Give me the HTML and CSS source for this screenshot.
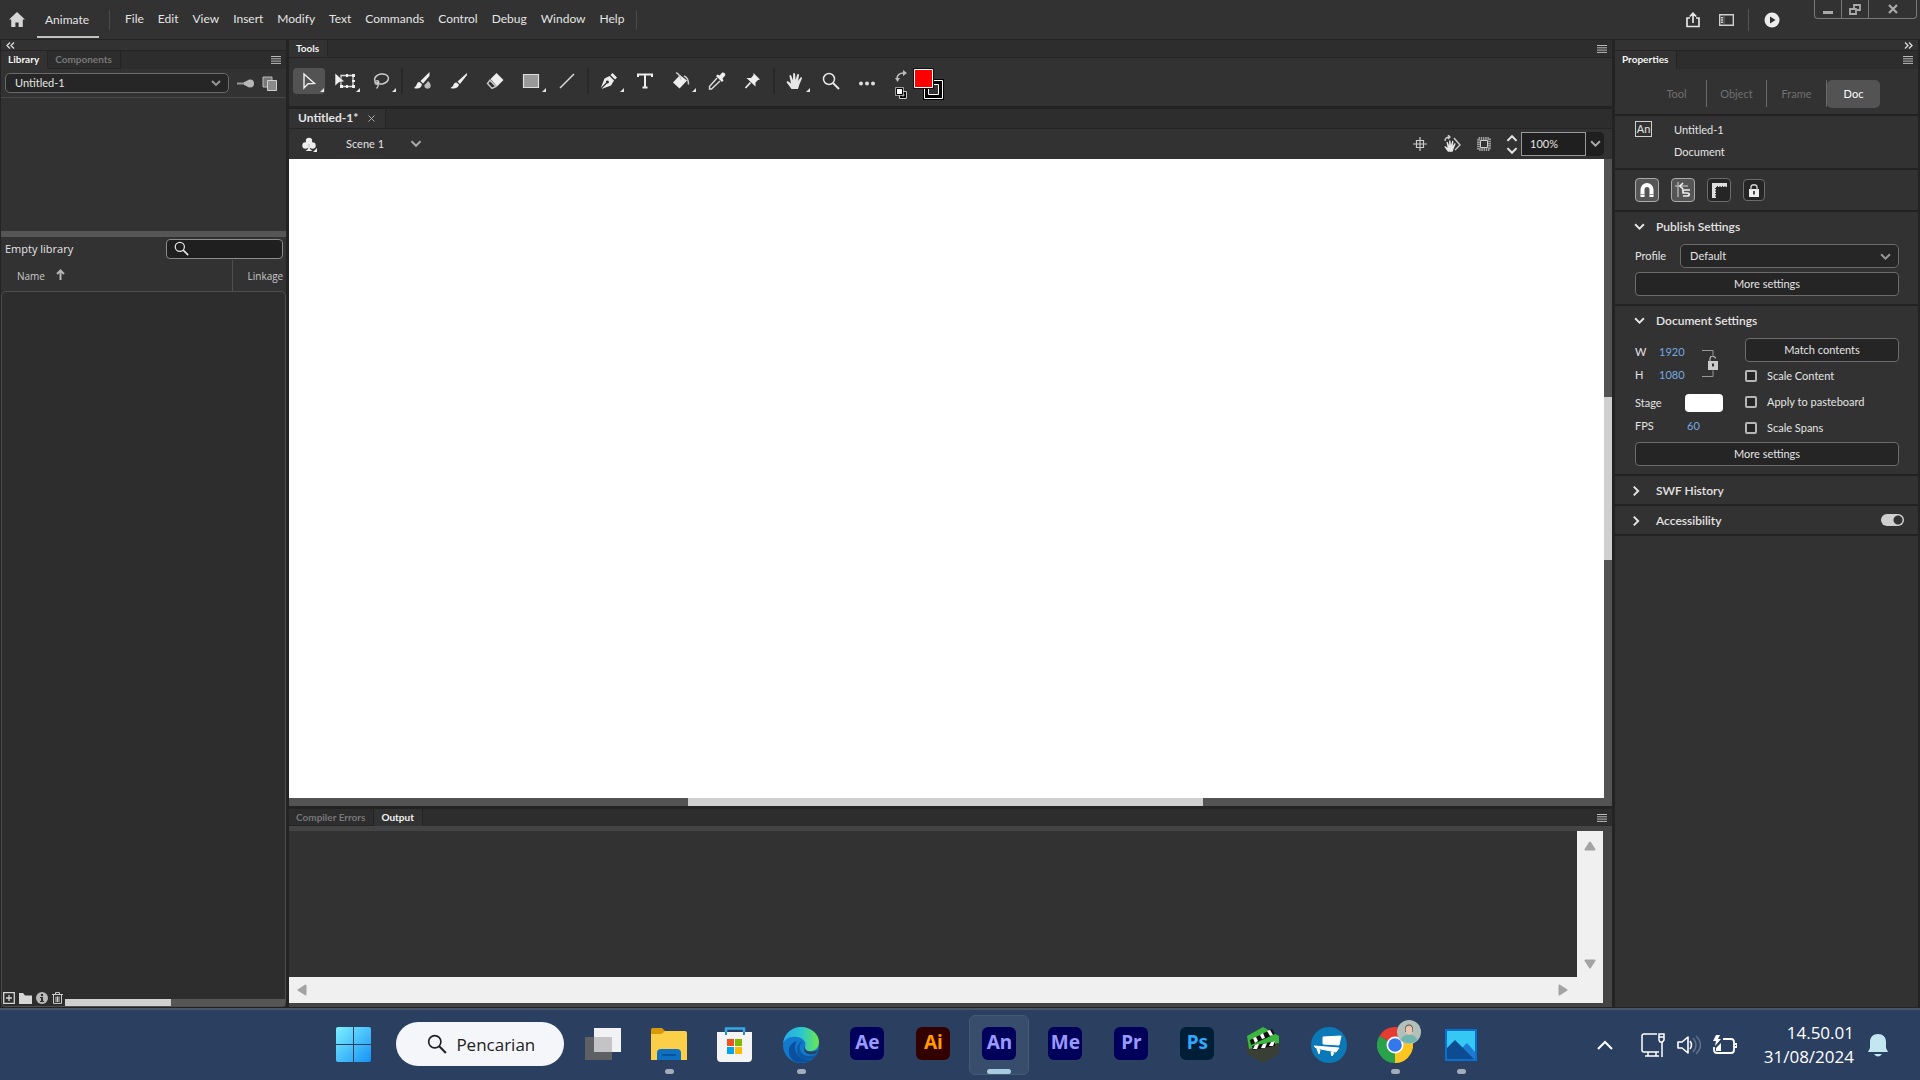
FILE: index.html
```html
<!DOCTYPE html>
<html lang="id">
<head>
    <meta charset="UTF-8">
    <meta name="viewport" content="width=device-width, initial-scale=1.0">
    <title>Animate</title>
    <link rel="stylesheet" href="styles.css">
</head>
<body>
    <!-- shared icons -->
    <svg class="sprite" width="0" height="0">
        <symbol id="chevron" viewBox="0 0 10 7"><path d="M1 1l4 4 4-4" fill="none" stroke="currentColor" stroke-width="1.8"/></symbol>
        <symbol id="burger" viewBox="0 0 10 8"><path d="M0 .5h10M0 2.8h10M0 5.1h10M0 7.4h10" stroke="currentColor"/></symbol>
        <symbol id="glass" viewBox="0 0 18 18"><circle cx="7" cy="7" r="5.5" fill="none" stroke="currentColor" stroke-width="1.5"/><path d="M11 11l6 6" stroke="currentColor" stroke-width="1.9"/></symbol>
        <symbol id="hand" viewBox="0 0 18 18"><path d="M5.5 17l-4.6-6.2c-.8-1.2.6-2 1.5-1.2L5 11.5 3.5 4.3c-.2-1.3 1.4-1.7 1.8-.4L7 8.2 7.2 2c0-1.3 1.8-1.3 1.9 0l.5 6L11.2 2.6c.4-1.2 2-.8 1.8.5l-.9 5.9 2.2-3.3c.8-1 2.1-.2 1.6.9l-2.6 6.2L12 17z" fill="currentColor"/></symbol>
        <symbol id="tri" viewBox="0 0 12 10"><path d="M6 1.5L10.5 8.5h-9z" fill="#a3a3a3" stroke="#a3a3a3" stroke-width="2" stroke-linejoin="round"/></symbol>
    </svg>

    <header class="menubar">
        <button class="home" aria-label="Home"><svg width="16" height="15" viewBox="0 0 16 15"><path d="M8 0L0 7.5h2.2V15h4.200v-4.5h3.2V15h4.200V7.5H16z" fill="#d6d6d6"/></svg></button>
        <a class="workspace" href="#">Animate</a>
        <nav class="menus">
            <a href="#">File</a><a href="#">Edit</a><a href="#">View</a><a href="#">Insert</a><a href="#">Modify</a><a href="#">Text</a><a href="#">Commands</a><a href="#">Control</a><a href="#">Debug</a><a href="#">Window</a><a href="#">Help</a>
        </nav>
        <div class="quick">
            <button aria-label="Share"><svg width="14" height="16" viewBox="0 0 14 16"><path d="M4 6H1v8.5h12V6h-3M7 11V2M3.8 4.5L7 1.3l3.2 3.2" fill="none" stroke="#e4e4e4" stroke-width="1.7"/></svg></button>
            <button aria-label="Workspaces"><svg width="15" height="12" viewBox="0 0 15 12"><path d="M.7.7h13.6v10.6H.7z" fill="none" stroke="#d0d0d0" stroke-width="1.4"/><path d="M3 3v6" stroke="#d0d0d0" stroke-width="2" stroke-dasharray="1.5 .8"/><path d="M5 1v10" stroke="#777"/></svg></button>
            <button class="play" aria-label="Test movie"><svg width="16" height="16" viewBox="0 0 16 16"><circle cx="8" cy="8" r="7.5" fill="#ececec"/><path d="M6 4.5v7L11.5 8z" fill="#303030"/></svg></button>
        </div>
        <div class="window-buttons">
            <button aria-label="Minimize"><svg width="12" height="10"><path d="M1 7h10v3H1z" fill="#aaa"/></svg></button>
            <button aria-label="Restore"><svg width="12" height="11" viewBox="0 0 12 11"><path d="M5 4V1h6v5H8M1 5h6v5H1z" fill="none" stroke="#aaa" stroke-width="1.8"/></svg></button>
            <button class="close" aria-label="Close"><svg width="10" height="10" viewBox="0 0 10 10"><path d="M1 1l8 8M9 1L1 9" stroke="#aaa" stroke-width="2.2"/></svg></button>
        </div>
    </header>

    <main class="workarea">
        <!-- Library -->
        <aside class="library">
            <div class="strip"><svg width="9" height="7" viewBox="0 0 9 7"><path d="M4 .5l-3 3 3 3M8 .5l-3 3 3 3" fill="none" stroke="#ddd" stroke-width="1.3"/></svg></div>
            <div class="tabs">
                <button class="tab active">Library</button>
                <button class="tab">Components</button>
                <svg class="burger" width="10" height="8"><use href="#burger"/></svg>
            </div>
            <div class="library-doc">
                <span class="select">
                    <select aria-label="Document"><option>Untitled-1</option></select>
                    <svg width="10" height="7"><use href="#chevron"/></svg>
                </span>
                <button aria-label="Pin library"><svg width="17" height="11" viewBox="0 0 17 11"><path d="M0 5.5h8" stroke="#999" stroke-width="2"/><path d="M7 4c3-1 4-2.500 6-2.500a4 4 0 0 1 0 8c-2 0-3-1.500-6-2.500z" fill="#b8b8b8"/></svg></button>
                <button aria-label="New library panel"><svg width="16" height="15" viewBox="0 0 16 15"><path d="M1 1h9v10H1z" fill="#777" stroke="#bbb"/><path d="M5.5 4.5h9v10h-9z" fill="#8a8a8a" stroke="#d0d0d0"/></svg></button>
            </div>
            <div class="preview"></div>
            <div class="library-search">
                <span>Empty library</span>
                <label class="search"><svg width="15" height="15"><use href="#glass"/></svg><input type="text" aria-label="Search library"></label>
            </div>
            <table class="columns">
                <tr>
                    <th>Name <svg width="9" height="11" viewBox="0 0 9 11"><path d="M4.5 11V2M1 5l3.5-3.5L8 5" fill="none" stroke="#b5b5b5" stroke-width="2"/></svg></th>
                    <th class="linkage">Linkage</th>
                </tr>
            </table>
            <div class="items">
                <div class="item-actions">
                    <button aria-label="New symbol"><svg width="12" height="12" viewBox="0 0 12 12"><path d="M.7.7h10.6v10.6H.7zM3 6h6M6 3v6" fill="none" stroke="#d6d6d6" stroke-width="1.3"/></svg></button>
                    <button aria-label="New folder"><svg width="13" height="11" viewBox="0 0 13 11"><path d="M0 0h4l2 2.5h7V11H0z" fill="#d6d6d6"/></svg></button>
                    <button aria-label="Properties"><svg width="12" height="12" viewBox="0 0 12 12"><circle cx="6" cy="6" r="6" fill="#b9b9b9"/><path d="M5 2h2v2H5zM4 5h3v4h1v1H4V9h1V6H4z" fill="#2d2d2d"/></svg></button>
                    <button aria-label="Delete"><svg width="11" height="12" viewBox="0 0 11 12"><path d="M0 2.5h11M3.5 2V.6h4V2M1.5 3v8.4h8V3M4 4.5V10M5.5 4.5V10M7 4.5V10" fill="none" stroke="#ccc"/></svg></button>
                </div>
                <div class="track"><div class="thumb"></div></div>
            </div>
        </aside>

        <section class="center">
            <div class="tabs tall">
                <button class="tab active">Tools</button>
                <svg class="burger" width="10" height="8"><use href="#burger"/></svg>
            </div>
            <div class="tools">
                <button class="tool more selected" aria-label="Selection"><svg width="18" height="18" viewBox="0 0 18 18"><path d="M4 2v14l4-4.2 6.500-.3z" fill="none" stroke="#eee" stroke-width="1.4"/></svg></button>
                <button class="tool more" aria-label="Free transform"><svg width="20" height="18" viewBox="0 0 20 18"><path d="M6 3.5h12v11H6z" fill="none" stroke="#ddd" stroke-width="1.3"/><path d="M17 2h3v3h-3zM17 13h3v3h-3zM5 13h3v3H5zM11 2h2v3h-2zM11 13h2v3h-2zM17 8h3v2h-3z" fill="#eee"/><path d="M0 1v13l4-3.500 5.500-1z" fill="#eee" stroke="#323232" stroke-width=".6"/></svg></button>
                <button class="tool more" aria-label="Lasso"><svg width="18" height="18" viewBox="0 0 18 18"><ellipse cx="9.5" cy="7" rx="7" ry="5" transform="rotate(-10 9.5 7)" fill="none" stroke="#ccc" stroke-width="1.5"/><path d="M4 9c2.500-1 4 1.500 2 3-2 1-4-.5-2.500-2.500M5.500 10c1.500 3 .5 5-1 6.500" fill="none" stroke="#ccc" stroke-width="1.3"/></svg></button>
                <span class="divider"></span>
                <button class="tool" aria-label="Fluid brush"><svg width="18" height="18" viewBox="0 0 18 18"><path d="M15.500 0L6.500 9l2.500 2.500L15.500 4zM5.500 10c-2.500 0-2.500 2.500-3.500 4L0 16c4 1.500 7.500 0 8-3.800z" fill="#eee"/><path d="M14 9c2.500 2 3 4 2.500 6-1.500 2.500-5.500 2-6-.5-.5-2.500 2-2.500 3.500-5.500z" fill="#bbb"/></svg></button>
                <button class="tool" aria-label="Brush"><svg width="18" height="18" viewBox="0 0 18 18"><path d="M17 1L7.500 9.500 10 12l7-9zM6.500 10.500c-2.500 0-3 2-3.500 3.500l-2.500 2c3.500 1.500 8 0 8.500-3.500z" fill="#eee"/></svg></button>
                <button class="tool" aria-label="Eraser"><svg width="18" height="18" viewBox="0 0 18 18"><path d="M10.5 1L17.5 8 11 14.5 4.5 7z" fill="#eee"/><path d="M4 8.2L1.500 11.500l4.500 5 4-2z" fill="none" stroke="#ccc" stroke-width="1.4"/></svg></button>
                <button class="tool more" aria-label="Rectangle"><svg width="18" height="18" viewBox="0 0 18 18"><path d="M1.500 2.500h15v13h-15z" fill="#999" stroke="#ddd" stroke-width="1.2"/></svg></button>
                <button class="tool" aria-label="Line"><svg width="18" height="18" viewBox="0 0 18 18"><path d="M2 16L16 2" stroke="#ddd" stroke-width="1.5"/></svg></button>
                <span class="divider"></span>
                <button class="tool more" aria-label="Pen"><svg width="18" height="18" viewBox="0 0 18 18"><path d="M12.500 1l4.500 4.500-2 2L10.500 3zM9.500 4l4.500 4.500-3 5L1.500 17 7 11.500a1.500 1.500 0 1 0-1-1L.8 16 4.500 6.500z" fill="#eee"/></svg></button>
                <button class="tool" aria-label="Text"><svg width="18" height="18" viewBox="0 0 18 18"><path d="M2 5V2.500h14V5M9 2.500v13M6.500 15.500h5" fill="none" stroke="#eee" stroke-width="2"/></svg></button>
                <button class="tool more" aria-label="Paint bucket"><svg width="18" height="18" viewBox="0 0 18 18"><path d="M8 3l7 5.500-7.500 8L1 10.500z" fill="#eee"/><path d="M4 1c2-.5 3.500 2 5 6.500M12 4c3 1 4.500 3 4.500 8.500" fill="none" stroke="#ccc" stroke-width="1.6"/></svg></button>
                <button class="tool" aria-label="Eyedropper"><svg width="18" height="18" viewBox="0 0 18 18"><path d="M9 6L1.500 14.500V17h2L12 9" fill="none" stroke="#ddd" stroke-width="1.4"/><path d="M8 4l1.500-1.500 2 1L14 .8c2-1 4 1 3 3L14.500 6.500l1 2L14 10z" fill="#eee"/></svg></button>
                <button class="tool" aria-label="Asset warp"><svg width="18" height="18" viewBox="0 0 18 18"><path d="M9.500 1l6.500 6.500-2 .5-2.500 2.500v4L2.500 6H7l2.500-3z" fill="#eee"/><path d="M6.500 10.500L1.500 16" stroke="#eee" stroke-width="1.8"/></svg></button>
                <span class="divider"></span>
                <button class="tool more" aria-label="Hand"><svg class="light" width="18" height="18"><use href="#hand"/></svg></button>
                <button class="tool" aria-label="Zoom"><svg class="light" width="18" height="18"><use href="#glass"/></svg></button>
                <button class="tool" aria-label="Edit toolbar"><svg width="18" height="18" viewBox="0 0 18 18"><g fill="#ddd"><circle cx="3" cy="11.500" r="2"/><circle cx="9" cy="11.500" r="2"/><circle cx="15" cy="11.500" r="2"/></g></svg></button>
                <div class="colors">
                    <div class="color-actions">
                        <button aria-label="Swap colors"><svg width="12" height="12" viewBox="0 0 12 12"><path d="M2 9C2 5 4 3 9 3" fill="none" stroke="#bbb" stroke-width="1.6"/><path d="M8 0l4 3-4 3zM0 8h5l-2.500 4z" fill="#bbb"/></svg></button>
                        <button aria-label="Default colors"><svg width="12" height="12" viewBox="0 0 12 12"><path d="M4.500 4.500h7v7h-7z" fill="#000" stroke="#ccc"/><path d="M7 7h2v2H7z" fill="#333" stroke="#ccc" stroke-width=".6"/><path d="M1.500 1.500h6v6h-6z" fill="#fff" stroke="#000"/><path d="M.5.5h8v8h-8z" fill="none" stroke="#ccc" stroke-width=".7"/></svg></button>
                    </div>
                    <svg width="32" height="33" viewBox="0 0 32 33"><path d="M10 11h21v21H10z" fill="#000"/><path d="M11.500 12.500h18v18h-18zM15.500 16.500h10v10h-10z" fill="#000" stroke="#fff"/><path d="M16 17h9v9h-9z" fill="#323232"/><path d="M0 0h21v21H0z" fill="#111"/><path d="M1.500 1.500h18v18h-18z" fill="#f00" stroke="#fff"/></svg>
                </div>
            </div>
            <div class="doc-tabs">
                <button class="doc-tab">Untitled-1* <svg width="7" height="7" viewBox="0 0 7 7"><path d="M.5.5l6 6M6.500.5l-6 6" stroke="#aaa"/></svg></button>
            </div>
            <div class="scene">
                <button aria-label="Edit symbols"><svg width="15" height="15" viewBox="0 0 15 15"><g fill="#eee"><circle cx="7" cy="4" r="3.200"/><circle cx="3.500" cy="8.500" r="3.200"/><circle cx="10.500" cy="8.500" r="3.200"/><path d="M6.500 7h1l.5 5 2.500 2h-7L6 12zM15 11v4h-4z"/></g></svg></button>
                <button class="scene-name">Scene 1 <svg width="12" height="8"><use href="#chevron"/></svg></button>
                <div class="view-tools">
                    <button aria-label="Center stage"><svg width="14" height="14" viewBox="0 0 14 14"><path d="M7 0v14M0 7h14M3.500 3.500h7v7h-7z" fill="none" stroke="#ccc" stroke-width="1.2"/></svg></button>
                    <button aria-label="Rotate stage"><svg class="light" width="18" height="18" viewBox="0 0 18 18"><use href="#hand" x="1" y="4" width="13" height="14"/><path d="M11 3l6 7-5 5M2 6c0-3 2-4 5-4M5 0l2 2-2 2" fill="none" stroke="#ccc" stroke-width="1.4"/></svg></button>
                    <button aria-label="Clip content"><svg width="14" height="14" viewBox="0 0 14 14"><path d="M1.500 1.500h11v11h-11z" fill="none" stroke="#999" stroke-width="3" stroke-dasharray="1.500 .7"/><path d="M3.500 3.500h7v7h-7z" fill="#323232" stroke="#ccc"/></svg></button>
                    <span class="stepper">
                        <svg class="up" width="12" height="8"><use href="#chevron"/></svg>
                        <svg width="12" height="8"><use href="#chevron"/></svg>
                    </span>
                    <span class="zoom">
                        <input type="text" value="100%" aria-label="Zoom level">
                        <button aria-label="Zoom presets"><svg width="11" height="8"><use href="#chevron"/></svg></button>
                    </span>
                </div>
            </div>
            <div class="stage">
                <div class="canvas"></div>
                <div class="scroll-y"><div class="thumb"></div></div>
                <div class="scroll-x"><div class="thumb"></div></div>
            </div>
            <div class="output">
                <div class="tabs tall">
                    <button class="tab">Compiler Errors</button>
                    <button class="tab active">Output</button>
                    <svg class="burger" width="10" height="8"><use href="#burger"/></svg>
                </div>
                <div class="output-body">
                    <div class="log"></div>
                    <div class="bar-y">
                        <svg width="12" height="10"><use href="#tri"/></svg>
                        <svg class="down" width="12" height="10"><use href="#tri"/></svg>
                    </div>
                    <div class="bar-x">
                        <svg class="left" width="12" height="10"><use href="#tri"/></svg>
                        <svg class="right" width="12" height="10"><use href="#tri"/></svg>
                    </div>
                </div>
            </div>
        </section>

        <!-- Properties -->
        <aside class="properties">
            <div class="strip end"><svg width="9" height="7" viewBox="0 0 9 7"><path d="M1 .5l3 3-3 3M5 .5l3 3-3 3" fill="none" stroke="#ddd" stroke-width="1.3"/></svg></div>
            <div class="tabs">
                <button class="tab active">Properties</button>
                <svg class="burger" width="10" height="8"><use href="#burger"/></svg>
            </div>
            <div class="modes">
                <button>Tool</button>
                <button>Object</button>
                <button>Frame</button>
                <button class="active">Doc</button>
            </div>
            <div class="group doc-info">
                <span class="an-icon">An</span>
                <div><p>Untitled-1</p><p>Document</p></div>
            </div>
            <div class="group toggles">
                <button class="on" aria-label="Snap to objects"><svg width="14" height="14" viewBox="0 0 14 14"><path d="M2.500 14V6.500a4.500 4.500 0 0 1 9 0V14" fill="none" stroke="#fff" stroke-width="4"/><path d="M0 11.500h5M9 11.500h5" stroke="#999"/></svg></button>
                <button class="on" aria-label="Snap align"><svg width="16" height="16" viewBox="0 0 16 16"><path d="M0 4h13M3 0v15" stroke="#aaa" stroke-width="1.5"/><path d="M8 1L5 4l3 3M15 8H8v3h4c3 0 3 3 0 3H8" fill="none" stroke="#eee" stroke-width="1.7"/></svg></button>
                <button aria-label="Rulers"><svg width="15" height="15" viewBox="0 0 15 15"><path d="M0 0h15v4H4v11H0z" fill="#ddd"/><path d="M5 3.500h10M3.500 5v10" stroke="#252525" stroke-dasharray="1 1.500"/></svg></button>
                <button class="small" aria-label="Lock guides"><svg width="10" height="13" viewBox="0 0 10 13"><path d="M0 5h10v8H0z" fill="#eee"/><path d="M2 6V3a3 2.300 0 0 1 6 0v3" fill="none" stroke="#ccc" stroke-width="1.4"/><path d="M4.200 7h1.600v3.500H4.200z" fill="#222"/></svg></button>
            </div>
            <div class="group publish">
                <h2><svg width="11" height="8"><use href="#chevron"/></svg>Publish Settings</h2>
                <div class="profile">
                    <label for="profile">Profile</label>
                    <span class="select">
                        <select id="profile"><option>Default</option></select>
                        <svg width="11" height="8"><use href="#chevron"/></svg>
                    </span>
                </div>
                <button class="wide">More settings</button>
            </div>
            <div class="group document">
                <h2><svg width="11" height="8"><use href="#chevron"/></svg>Document Settings</h2>
                <div class="doc-grid">
                    <div class="fields">
                        <div class="size">
                            <div>
                                <p><label for="w">W</label><input id="w" type="text" value="1920"></p>
                                <p><label for="h">H</label><input id="h" type="text" value="1080"></p>
                            </div>
                            <svg width="17" height="29" viewBox="0 0 17 29"><path d="M1 1.500h11v5M1 27.500h11v-6" fill="none" stroke="#999"/><path d="M7 12h10v9H7z" fill="#ccc"/><path d="M9 12V9.500c0-3 5-3 5.500 0" fill="none" stroke="#bbb" stroke-width="1.2"/><path d="M11 14.500h2v3h-2z" fill="#333"/></svg>
                        </div>
                        <p class="far"><label for="stage">Stage</label><input id="stage" type="color" value="#ffffff"></p>
                        <p class="far"><label for="fps">FPS</label><input id="fps" type="text" value="60"></p>
                    </div>
                    <div class="scaling">
                        <button class="wide">Match contents</button>
                        <label><input type="checkbox">Scale Content</label>
                        <label><input type="checkbox">Apply to pasteboard</label>
                        <label><input type="checkbox">Scale Spans</label>
                    </div>
                </div>
                <button class="wide">More settings</button>
            </div>
            <div class="group closed">
                <h2><svg width="11" height="8"><use href="#chevron"/></svg>SWF History</h2>
            </div>
            <div class="group closed">
                <h2><svg width="11" height="8"><use href="#chevron"/></svg><label for="access">Accessibility</label></h2>
                <input id="access" class="switch" type="checkbox" checked>
            </div>
        </aside>
    </main>

    <footer class="taskbar">
        <nav class="apps">
            <button class="app" aria-label="Start"><svg width="36" height="36" viewBox="0 0 36 36"><defs><linearGradient id="win" x2="1" y2="1"><stop stop-color="#7df0ff"/><stop offset="1" stop-color="#1592f5"/></linearGradient></defs><path d="M2 0h15v17H0V2q0-2 2-2zM18 0h15q2 0 2 2v15H18zM0 18h17v17H2q-2 0-2-2zM18 18h17v15q0 2-2 2H18z" fill="url(#win)"/></svg></button>
            <label class="task-search"><svg width="20" height="20"><use href="#glass"/></svg><input type="text" placeholder="Pencarian" aria-label="Pencarian"></label>
            <button class="app" aria-label="Task view"><svg width="36" height="36" viewBox="0 0 36 36"><path d="M0 10h27v23H0z" fill="#5f6063"/><path d="M9 1h27v24H9z" fill="#f2f2f4"/><path d="M9 10h18v15H9z" fill="#c4c4c6"/></svg></button>
            <button class="app open" aria-label="File Explorer"><svg width="36" height="36" viewBox="0 0 36 36"><path d="M0 8V3q0-2 2-2h9l4 4h-3v3z" fill="#d99a07"/><path d="M0 7h10l4-3h20q2 0 2 2v27H0z" fill="#fbcf47"/><path d="M6 33V26q0-4 4-4h16q4 0 4 4v7z" fill="#0f6fc2"/><path d="M11 28h14" stroke="#084a8c" stroke-width="1.5"/></svg></button>
            <button class="app" aria-label="Microsoft Store"><svg width="36" height="36" viewBox="0 0 36 36"><path d="M9 8V1.500h18V8" fill="none" stroke="#35a9e6" stroke-width="2.5"/><path d="M0 5h35v26q0 4-4 4H4q-4 0-4-4z" fill="#f4f4f4"/><path d="M9 5v3M27 5v3" stroke="#238bc9" stroke-width="2"/><path d="M10 12h7v7h-7z" fill="#f05023"/><path d="M18 12h7v7h-7z" fill="#7fba00"/><path d="M10 20h7v7h-7z" fill="#00a4ef"/><path d="M18 20h7v7h-7z" fill="#ffb900"/></svg></button>
            <button class="app open" aria-label="Edge"><svg width="36" height="36" viewBox="0 0 36 36"><defs><linearGradient id="edge"><stop stop-color="#28a9e8"/><stop offset=".5" stop-color="#2bc5cf"/><stop offset="1" stop-color="#6ae84c"/></linearGradient></defs><circle cx="18" cy="18" r="18" fill="#1279cf"/><path d="M0 16C2 5 10 0 18 0c10 0 18 7 18 15 0 8-7 10-12 9-3-1-3-2-2-4 2-5-2-9-8-10C8 9 3 11 0 16z" fill="url(#edge)"/><path d="M14 14c-5 8 0 19 13 19-5 4-15 4-19-2-5-8-1-15 6-17z" fill="#0b4fa0"/><path d="M21 14c-6 2-7 14 5 15 4 0 7-1 9-4-2 8-12 10-18 5-6-6-3-15 4-16z" fill="#0c59a4"/><path d="M22 19c-1 6 7 7 13 4-1 2-2 3-3 4-8 2-13-3-10-8z" fill="#2b3f61"/></svg></button>
            <button class="app"><span class="adobe">Ae</span></button>
            <button class="app"><span class="adobe ai">Ai</span></button>
            <button class="app current"><span class="adobe">An</span></button>
            <button class="app"><span class="adobe">Me</span></button>
            <button class="app"><span class="adobe">Pr</span></button>
            <button class="app"><span class="adobe ps">Ps</span></button>
            <button class="app" aria-label="Clapper"><svg width="32" height="36" viewBox="0 0 32 36"><path d="M16 0l16 9v18l-16 9L0 27V9z" fill="#3a3f36"/><path d="M16 0l16 9v7L2 22 0 9z" fill="#39b83d"/><path d="M3 13L25 2l3 5L4 18z" fill="#111"/><path d="M6 11l3-1 2 4-3 2zM13 8l3-2 2 5-3 1zM20 4l3-1 3 5-3 1z" fill="#fff"/><path d="M5 19l23-5v5L6 23z" fill="#111"/><path d="M8 18l4-1-2 5H6zM16 17l4-1-2 5h-4zM24 15l4-1-2 5h-4z" fill="#fff"/></svg></button>
            <button class="app" aria-label="Blocs"><svg width="36" height="36" viewBox="0 0 36 36"><circle cx="18" cy="18" r="18" fill="#0b78b8"/><path d="M12 10l18-1-2 9-16-1zM3 19l25 2-3 4-20-4zM6 22l3 1-1 4zM20 25l3 1-2 3z" fill="#fff" stroke="#fff" stroke-linejoin="round"/></svg></button>
            <button class="app open chrome" aria-label="Chrome"><svg width="36" height="36" viewBox="0 0 36 36"><path d="M18 18L2.400 9a18 18 0 0 1 31.200 0z" fill="#e53b30"/><path d="M18 18L33.600 9A18 18 0 0 1 18 36z" fill="#fcc51f"/><path d="M18 18v18A18 18 0 0 1 2.400 9z" fill="#2aa14b"/><path d="M18 10h15.600A18 18 0 0 1 18 36l7-14z" fill="#fcc51f"/><circle cx="18" cy="18" r="8.500" fill="#fff"/><circle cx="18" cy="18" r="6.800" fill="#3478eb"/></svg><svg class="avatar" width="24" height="24" viewBox="0 0 24 24"><circle cx="12" cy="12" r="12" fill="#b3c0ba"/><path d="M4 20c1-7 15-7 16 0-4 4-12 4-16 0z" fill="#6fb5b0"/><path d="M8 9c0-6 8-6 8 0v3H8z" fill="#4c4540"/><ellipse cx="12" cy="10" rx="3.500" ry="4.500" fill="#e8c4b1"/></svg></button>
            <button class="app open" aria-label="Photos"><svg width="32" height="32" viewBox="0 0 32 32"><path d="M1 1h30v30H1z" fill="#35c8f5" stroke="#0b6fce" stroke-width="2"/><path d="M17 19l5-5 8 9v7h-8z" fill="#1b7bd1"/><path d="M2 19l8-8 19 19H2z" fill="#0e4c92"/></svg></button>
        </nav>
        <div class="tray">
            <button class="caret" aria-label="Hidden icons"><svg width="16" height="10" viewBox="0 0 16 10"><path d="M1 9l7-7 7 7" fill="none" stroke="#fff" stroke-width="2"/></svg></button>
            <svg width="24" height="24" viewBox="0 0 24 24"><path d="M16 1H3a2 2 0 0 0-2 2v14a2 2 0 0 0 2 2h15M7 19v4M15 19v4M4 23h14M18 1h5v6l-1.500 2H19l-1-2zM18 4h5M21 9v15" fill="none" stroke="#fff" stroke-width="1.5"/></svg>
            <svg width="24" height="20" viewBox="0 0 24 20"><path d="M1 7h4l6-5v16l-6-5H1z" fill="none" stroke="#fff" stroke-width="1.6" stroke-linejoin="round"/><path d="M13 6q3 4 0 8" fill="none" stroke="#fff" stroke-width="1.6"/><path d="M16 3q6 7 0 14M19 1q9 9 0 18" fill="none" stroke="#60718e" stroke-width="1.6"/></svg>
            <svg width="24" height="20" viewBox="0 0 24 20"><path d="M10 4h8q3 0 3 3v8q0 3-3 3H4q-3 0-3-3v-3M21 9h3v3h-3" fill="none" stroke="#fff" stroke-width="1.8"/><path d="M3 0h4L5 4h3l-6 7 1-5H0zM3 16v-3l5-5v8z" fill="#fff"/></svg>
            <div class="clock"><time>14.50.01</time><time>31/08/2024</time></div>
            <svg width="20" height="23" viewBox="0 0 20 23"><path d="M10 0c5 0 8 3 8 8v6l2 4H0l2-4V8c0-5 3-8 8-8zM6 20h8q-4 5-8 0z" fill="#c3e7f0"/></svg>
        </div>
    </footer>
</body>
</html>
```

FILE: styles.css
```css
* {
    box-sizing: border-box;
}
body {
    margin: 0;
    height: 100vh;
    display: flex;
    flex-direction: column;
    overflow: hidden;
    background-color: #232323;
    color: #e4e4e4;
    font-family: Lato, "Open Sans", sans-serif;
    font-size: 12px;
    line-height: 16px;
}
button, input, select {
    font: inherit;
    color: inherit;
    background: none;
    border: none;
    margin: 0;
    padding: 0;
}
button {
    display: flex;
    align-items: center;
    justify-content: center;
}
a {
    color: inherit;
    text-decoration: none;
}
p {
    margin: 0;
}
svg {
    display: block;
    flex: none;
}
.sprite {
    position: absolute;
}
.light {
    color: #e8e8e8;
}

/* menu bar */
.menubar {
    display: flex;
    align-items: center;
    height: 39px;
    flex: none;
    padding-left: 9px;
    background-color: #323232;
}
.workspace {
    height: 36px;
    margin-left: 12px;
    padding: 10px 10px 0 8px;
    border-bottom: 2px solid #c0c0c0;
}
.menus {
    display: flex;
    gap: 14px;
    margin-left: 10px;
    padding: 1px 12px 3px 15px;
    border-left: 1px solid #4a4a4a;
    border-right: 1px solid #4a4a4a;
}
.quick {
    display: flex;
    align-items: center;
    gap: 19px;
    margin-left: auto;
}
.play {
    height: 22px;
    padding-left: 15px;
    border-left: 1px solid #555;
    margin-left: -5px;
}
.window-buttons {
    display: flex;
    align-self: flex-start;
    height: 19px;
    margin: 0 3px 0 34px;
    border: 1px solid #777;
    border-top: none;
    border-radius: 0 0 4px 4px;
}
.window-buttons button {
    width: 27px;
    border-right: 1px solid #777;
}
.window-buttons .close {
    width: 47px;
    border-right: none;
}

.workarea {
    display: grid;
    grid-template-columns: 285px minmax(0, 1fr) 303px;
    gap: 3px;
    flex: 1;
    min-height: 0;
    padding: 1px 2px 1px 1px;
}
.library, .center, .properties {
    display: flex;
    flex-direction: column;
    min-width: 0;
    min-height: 0;
    background-color: #323232;
}

/* tabs */
.strip {
    display: flex;
    align-items: center;
    height: 11px;
    flex: none;
    padding: 0 5px;
    border-bottom: 1px solid #252525;
}
.strip.end {
    justify-content: flex-end;
}
.tabs {
    display: flex;
    align-items: stretch;
    height: 18px;
    flex: none;
    padding-right: 5px;
    background-color: #2d2d2d;
    font-size: 10px;
    font-weight: 700;
}
.tabs.tall {
    height: 17px;
}
.tab {
    padding: 0 8px 1px 7px;
    color: #777;
    border-right: 1px solid #242424;
    border-bottom: 1px solid #242424;
}
.tab.active {
    color: #f4f4f4;
    background-color: #323232;
    border-bottom-color: #323232;
}
.burger {
    align-self: center;
    margin-left: auto;
    color: #bbb;
}

/* library */
.library-doc {
    display: flex;
    align-items: center;
    gap: 8px;
    height: 29px;
    padding: 0 8px 0 4px;
    border-bottom: 1px solid #484848;
}
.select {
    position: relative;
    display: flex;
    flex: 1;
}
.select select {
    width: 100%;
    height: 20px;
    padding: 0 9px;
    appearance: none;
    background-color: #262626;
    border: 1px solid #6b6b6b;
    border-radius: 5px;
}
.library-doc select {
    font-size: 11px;
}
.select svg {
    position: absolute;
    right: 8px;
    top: 7px;
    color: #999;
}
.preview {
    height: 139px;
    border-bottom: 6px solid #565656;
}
.library-search {
    display: flex;
    align-items: center;
    justify-content: space-between;
    height: 23px;
    padding: 0 3px 0 4px;
    font-family: "Open Sans", sans-serif;
    font-size: 11px;
}
.search {
    display: flex;
    align-items: center;
    width: 117px;
    height: 20px;
    padding: 0 7px;
    background-color: #1f1f1f;
    border: 1px solid #8c8c8c;
    border-radius: 4px;
}
.search input {
    width: 80px;
    margin-left: 4px;
}
.columns {
    width: 100%;
    border-collapse: collapse;
    font-family: "Open Sans", sans-serif;
    font-size: 10px;
}
.columns th {
    height: 31px;
    padding: 0 0 0 16px;
    text-align: left;
    font-weight: 400;
    color: #c8c8c8;
}
.columns svg {
    display: inline;
    margin-left: 8px;
}
.columns .linkage {
    width: 54px;
    padding-left: 15px;
    border-left: 1px solid #4e4e4e;
}
.items {
    display: flex;
    align-items: flex-end;
    flex: 1;
    padding-left: 1px;
    background-color: #2d2d2d;
    border: 1px solid #4e4e4e;
    border-radius: 5px;
}
.item-actions {
    display: flex;
    align-items: center;
    gap: 4px;
    height: 16px;
    padding-right: 2px;
}
.track {
    flex: 1;
    background-color: #565656;
}
.track .thumb {
    width: 48%;
    height: 7px;
    background-color: #cfcfcf;
}

/* tools */
.tools {
    display: flex;
    align-items: center;
    gap: 4px;
    height: 49px;
    flex: none;
    padding: 0 0 2px 4px;
    border-top: 1px solid #252525;
}
.tool {
    position: relative;
    width: 32px;
    height: 26px;
}
.tool.selected {
    background-color: #535353;
    border-radius: 4px;
}
.tool.more::after {
    content: "";
    position: absolute;
    right: 1px;
    bottom: 2px;
    border: 2px solid transparent;
    border-right-color: #e4e4e4;
    border-bottom-color: #e4e4e4;
}
.divider {
    width: 2px;
    height: 26px;
    background-color: #292929;
}
.colors {
    display: flex;
    align-items: center;
    gap: 6px;
    margin-left: 8px;
    padding-top: 6px;
}
.color-actions {
    display: flex;
    flex-direction: column;
    gap: 5px;
}
.doc-tabs {
    display: flex;
    height: 23px;
    flex: none;
    background-color: #2d2d2d;
    border-top: 3px solid #232323;
    border-bottom: 1px solid #252525;
    font-weight: 700;
}
.doc-tab {
    gap: 10px;
    padding: 0 10px 1px 9px;
    background-color: #323232;
    border-right: 1px solid #242424;
}
.scene {
    display: flex;
    align-items: center;
    height: 30px;
    flex: none;
    padding: 0 8px 0 13px;
    font-size: 11px;
}
.scene-name {
    gap: 26px;
    margin-left: 29px;
}
.scene-name svg, .zoom svg {
    color: #aaa;
}
.view-tools {
    display: flex;
    align-items: center;
    gap: 16px;
    margin-left: auto;
}
.stepper {
    display: flex;
    flex-direction: column;
    gap: 5px;
    margin: 0 -1px;
}
.up {
    transform: rotate(180deg);
}
.zoom {
    display: flex;
    height: 24px;
    margin-left: -12px;
}
.zoom input {
    width: 65px;
    padding: 0 8px;
    background-color: #1f1f1f;
    border: 1px solid #999;
}
.zoom button {
    width: 18px;
    background-color: #1f1f1f;
    border-radius: 0 5px 5px 0;
}

/* stage */
.stage {
    display: grid;
    grid-template: minmax(0, 1fr) 8px / minmax(0, 1fr) 8px;
    flex: 1;
    min-height: 0;
    background-color: #535353;
}
.canvas {
    background-color: #fff;
}
.scroll-y {
    padding-top: 238px;
}
.scroll-y .thumb {
    height: 163px;
    background-color: #cfcfcf;
}
.scroll-x .thumb {
    width: 515px;
    height: 8px;
    margin-left: 399px;
    background-color: #cfcfcf;
}

/* output */
.output {
    display: flex;
    flex-direction: column;
    height: 201px;
    border-top: 3px solid #232323;
}
.output-body {
    display: grid;
    grid-template: minmax(0, 1fr) 26px / minmax(0, 1fr) 26px;
    flex: 1;
    border: solid #444;
    border-width: 5px 9px 4px 0;
}
.bar-y, .bar-x {
    display: flex;
    align-items: center;
    justify-content: space-between;
    background-color: #f0f0f0;
}
.bar-y {
    flex-direction: column;
    padding: 10px 0 8px;
}
.bar-x {
    grid-column: 1 / 3;
    padding: 0 34px 0 7px;
}
.down {
    transform: rotate(180deg);
}
.left {
    transform: rotate(-90deg);
}
.right {
    transform: rotate(90deg);
}

/* properties */
.properties {
    font-size: 11px;
}
.modes {
    display: flex;
    align-items: center;
    justify-content: flex-end;
    height: 47px;
    flex: none;
    padding: 4px 38px 0 0;
    border-bottom: 2px solid #222;
}
.modes button {
    width: 60px;
    height: 27px;
    color: #707070;
    border-right: 1px solid #6a6a6a;
}
.modes .active {
    width: 53px;
    height: 28px;
    color: #fff;
    background-color: #535353;
    border: none;
    border-radius: 5px;
}
.group {
    flex: none;
    padding: 0 19px 0 20px;
    border-bottom: 2px solid #222;
}
.group h2 {
    display: flex;
    align-items: center;
    gap: 11px;
    height: 30px;
    margin: 0 0 0 -1px;
    font-size: 12px;
    font-weight: 600;
}
.doc-info {
    display: flex;
    gap: 22px;
    height: 54px;
    padding: 3px 20px 0;
}
.doc-info p {
    line-height: 22px;
}
.an-icon {
    width: 17px;
    height: 16px;
    margin-top: 2px;
    border: 1px solid #d0d0d0;
    line-height: 14px;
    text-align: center;
}
.toggles {
    display: flex;
    align-items: center;
    gap: 12px;
    height: 42px;
}
.toggles button {
    width: 24px;
    height: 24px;
    background-color: #252525;
    border: 1px solid #6b6b6b;
    border-radius: 4px;
}
.toggles .on {
    background-color: #555;
    border-color: #aaa;
}
.toggles .small {
    width: 22px;
    height: 22px;
}
.publish {
    height: 94px;
}
.profile {
    display: flex;
    align-items: center;
    gap: 14px;
    margin: 2px 0 4px;
}
.properties .select select {
    height: 24px;
}
.properties .select svg {
    top: 9px;
}
.wide {
    width: 100%;
    height: 24px;
    background-color: #252525;
    border: 1px solid #6b6b6b;
    border-radius: 4px;
}
.document {
    height: 170px;
}
.doc-grid {
    display: grid;
    grid-template-columns: 110px 1fr;
    height: 104px;
    margin-top: 2px;
}
.size {
    display: flex;
    justify-content: space-between;
    width: 84px;
    height: 56px;
    padding: 5px 6px 0 0;
}
.size p, .far {
    display: flex;
    align-items: center;
    height: 18px;
    margin-bottom: 5px;
}
.size label {
    width: 24px;
}
.size input, .far input[type="text"] {
    width: 32px;
    color: #76a9e0;
}
.size svg {
    margin: 6px -5px 0 0;
}
.far label {
    width: 50px;
}
.far input[type="color"] {
    width: 38px;
    height: 18px;
    appearance: none;
    border-radius: 4px;
    overflow: hidden;
}
.far input::-webkit-color-swatch-wrapper {
    padding: 0;
}
.far input::-webkit-color-swatch {
    border: none;
}
.far input[type="text"] {
    padding-left: 2px;
}
.scaling label {
    display: flex;
    align-items: center;
    gap: 10px;
    height: 26px;
    padding-top: 2px;
}
.scaling input {
    width: 12px;
    height: 12px;
    appearance: none;
    background-color: #252525;
    border: 2px solid #b5b5b5;
    border-radius: 2px;
}
.closed {
    display: flex;
    align-items: center;
    justify-content: space-between;
    padding-right: 14px;
}
.closed h2 {
    height: 28px;
    padding-top: 2px;
}
.closed svg {
    margin: 0 3px 0 -3px;
    transform: rotate(-90deg);
}
.switch {
    width: 23px;
    height: 12px;
    appearance: none;
    background: radial-gradient(circle at 17px 6px, #323232 4px, #cfcfcf 5px);
    border-radius: 6px;
}

/* taskbar */
.taskbar {
    display: flex;
    align-items: center;
    height: 72px;
    flex: none;
    background-color: #2b3f61;
    border-top: 2px solid #48566a;
    color: #fff;
    font-family: "Open Sans", sans-serif;
    font-size: 17px;
}
.apps {
    display: flex;
    gap: 6px;
    margin: 0 auto;
    padding-left: 219px;
}
.app {
    position: relative;
    width: 60px;
    height: 60px;
}
.open::after, .current::after {
    content: "";
    position: absolute;
    left: 26px;
    bottom: 1px;
    width: 9px;
    height: 5px;
    border-radius: 3px;
    background-color: #a3acba;
}
.current {
    background-color: #384d6b;
    border: 1px solid #455a76;
    border-radius: 6px;
}
.current::after {
    left: 17px;
    bottom: 0;
    width: 24px;
    background-color: #a9cbdf;
}
.task-search {
    display: flex;
    align-items: center;
    gap: 9px;
    width: 168px;
    height: 44px;
    margin: 7px 3px 0 6px;
    padding-left: 31px;
    border-radius: 22px;
    background-color: #f4f6f9;
    color: #222;
}
.task-search input {
    width: 90px;
}
.task-search input::placeholder {
    color: #222;
}
.adobe {
    width: 34px;
    height: 33px;
    margin-bottom: 3px;
    border-radius: 6px;
    background-color: #00005b;
    color: #9999ff;
    font-family: "Noto Sans", sans-serif;
    font-size: 19px;
    font-weight: 700;
    line-height: 31px;
}
.ai {
    background-color: #330000;
    color: #ff9a00;
}
.ps {
    background-color: #001e36;
    color: #31a8ff;
}
.avatar {
    position: absolute;
    right: 4px;
    top: 5px;
}
.tray {
    display: flex;
    align-items: center;
    gap: 12px;
    padding-right: 32px;
}
.caret {
    margin-right: 16px;
}
.clock {
    display: flex;
    flex-direction: column;
    margin: 0 2px 0 15px;
    text-align: right;
    line-height: 24px;
}
```
